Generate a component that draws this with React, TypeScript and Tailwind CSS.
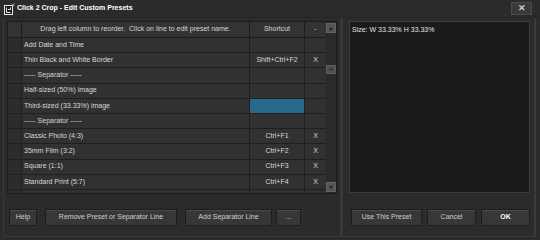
import { FC } from "react";

type Row = { name: string; key: string; del: string; selected?: boolean };

const rows: Row[] = [
  { name: "Add Date and Time", key: "", del: "" },
  { name: "Thin Black and White Border", key: "Shift+Ctrl+F2", del: "X" },
  { name: "----- Separator -----", key: "", del: "" },
  { name: "Half-sized (50%) image", key: "", del: "" },
  { name: "Third-sized (33.33%) image", key: "", del: "", selected: true },
  { name: "----- Separator -----", key: "", del: "" },
  { name: "Classic Photo (4:3)", key: "Ctrl+F1", del: "X" },
  { name: "35mm Film (3:2)", key: "Ctrl+F2", del: "X" },
  { name: "Square (1:1)", key: "Ctrl+F3", del: "X" },
  { name: "Standard Print (5:7)", key: "Ctrl+F4", del: "X" },
  { name: "", key: "Ctrl+F5", del: "X" },
];

const CropIcon: FC = () => (
  <svg width="11" height="12" viewBox="0 0 11 12">
    <rect x="0.5" y="2.5" width="8" height="9" fill="#1c1c1c" stroke="#e8e8e8" />
    <path d="M2.5 4.5v5h4" fill="none" stroke="#e8e8e8" />
    <path d="M4 6.5h2.5v-2" fill="none" stroke="#e8e8e8" />
    <path d="M8 0.5l2.5 2.5M10.5 0.5l-2.5 2.5" stroke="#cfcfcf" strokeWidth="0.8" />
  </svg>
);

const Btn: FC<{ label: string; w: string; bold?: boolean }> = ({ label, w, bold }) => (
  <button
    className={`${w} h-[17px] bg-[#373737] border border-[#1d1d1d] shadow-[inset_0_1px_0_#4a4a4a] flex items-center justify-center ${
      bold ? "font-bold text-white" : "text-[#cfcfcf]"
    }`}
  >
    {label}
  </button>
);

const App: FC = () => {
  return (
    <div className="w-[540px] h-[240px] bg-[#2b2b2b] font-['Liberation_Sans',Arial,sans-serif] text-[7px] text-[#d8d8d8] flex flex-col overflow-hidden select-none">
      {/* title bar */}
      <div className="h-[18px] flex items-center pl-[4px] pr-[8px] border-b border-[#252525]">
        <CropIcon />
        <span className="ml-[2px] font-bold text-[7px] text-white">Click 2 Crop - Edit Custom Presets</span>
        <div className="ml-auto w-[21px] h-[13px] bg-[#3a3a3a] border border-[#4a4a4a] flex items-center justify-center text-[#d0d0d0] text-[9px] font-bold">
          ✕
        </div>
      </div>

      <div className="flex flex-1 pl-[3px] pr-[4px] pb-[3px]">
        {/* left group */}
        <div className="w-[340px] flex flex-col pt-[3px] pl-[3px] border-l border-b border-r-[3px] border-l-[#383838] border-b-[#3a3a3a] border-r-[#383838]">
          <div className="w-[330px] h-[173px] flex border border-[#1c1c1c] bg-[#2e2e2e]">
            <div className="w-[319px] flex flex-col overflow-hidden">
              {/* header */}
              <div className="h-[16px] shrink-0 flex border-b border-[#1c1c1c] bg-[#333333] text-[#d4d4d4]">
                <div className="w-[14px] border-r border-[#1c1c1c]" />
                <div className="w-[228px] border-r border-[#1c1c1c] flex items-center justify-center">
                  Drag left column to reorder.&nbsp; Click on line to edit preset name.
                </div>
                <div className="w-[55px] border-r border-[#1c1c1c] flex items-center justify-center">Shortcut</div>
                <div className="flex-1 flex items-center justify-center">-</div>
              </div>
              {rows.map((r, i) => (
                <div key={i} className="h-[15.2px] shrink-0 flex border-b border-[#1f1f1f] bg-[#313131]">
                  <div className="w-[14px] border-r border-[#1f1f1f] bg-[#2c2c2c]" />
                  <div className="w-[228px] border-r border-[#1f1f1f] flex items-center pl-[2px]">{r.name}</div>
                  <div
                    className={`w-[55px] border-r border-[#1f1f1f] flex items-center justify-center ${
                      r.selected ? "bg-[#27698b]" : ""
                    }`}
                  >
                    {r.key}
                  </div>
                  <div className="flex-1 flex items-center justify-center">{r.del}</div>
                </div>
              ))}
            </div>
            {/* scrollbar */}
            <div className="w-[10px] flex flex-col bg-[#2a2a2a] pt-[1px] pb-[1px]">
              <div className="h-[10px] bg-[#555555] border border-[#636363] flex items-center justify-center">
                <div className="w-0 h-0 border-l-[2.5px] border-r-[2.5px] border-b-[3px] border-l-transparent border-r-transparent border-b-[#222]" />
              </div>
              <div className="mt-[32px] h-[9px] bg-[#505050] border border-[#5e5e5e] flex items-center justify-center">
                <div className="w-[4px] h-[1px] bg-[#2a2a2a]" />
              </div>
              <div className="mt-auto h-[10px] bg-[#555555] border border-[#636363] flex items-center justify-center">
                <div className="w-0 h-0 border-l-[2.5px] border-r-[2.5px] border-t-[3px] border-l-transparent border-r-transparent border-t-[#222]" />
              </div>
            </div>
          </div>
          <div className="mt-[15px] pl-[2px] flex">
            <Btn label="Help" w="w-[28px]" />
            <div className="ml-[8px]">
              <Btn label="Remove Preset or Separator Line" w="w-[132px]" />
            </div>
            <div className="ml-[8px]">
              <Btn label="Add Separator Line" w="w-[87px]" />
            </div>
            <div className="ml-[4px]">
              <Btn label="..." w="w-[25px]" />
            </div>
          </div>
        </div>

        {/* right group */}
        <div className="flex-1 flex flex-col pt-[3px] pl-[6px] border-b border-r-[2px] border-[#3a3a3a]">
          <div className="w-[181px] h-[172px] bg-[#1b1b1b] border border-[#3c3c3c] px-[2px] pt-[3px] text-[#e2e2e2]">
            Size: W 33.33% H 33.33%
          </div>
          <div className="mt-[16px] pl-[2px] flex gap-[5px]">
            <Btn label="Use This Preset" w="w-[71px]" />
            <Btn label="Cancel" w="w-[49px]" />
            <Btn label="OK" w="w-[49px]" bold />
          </div>
        </div>
      </div>
    </div>
  );
};

export default App;
